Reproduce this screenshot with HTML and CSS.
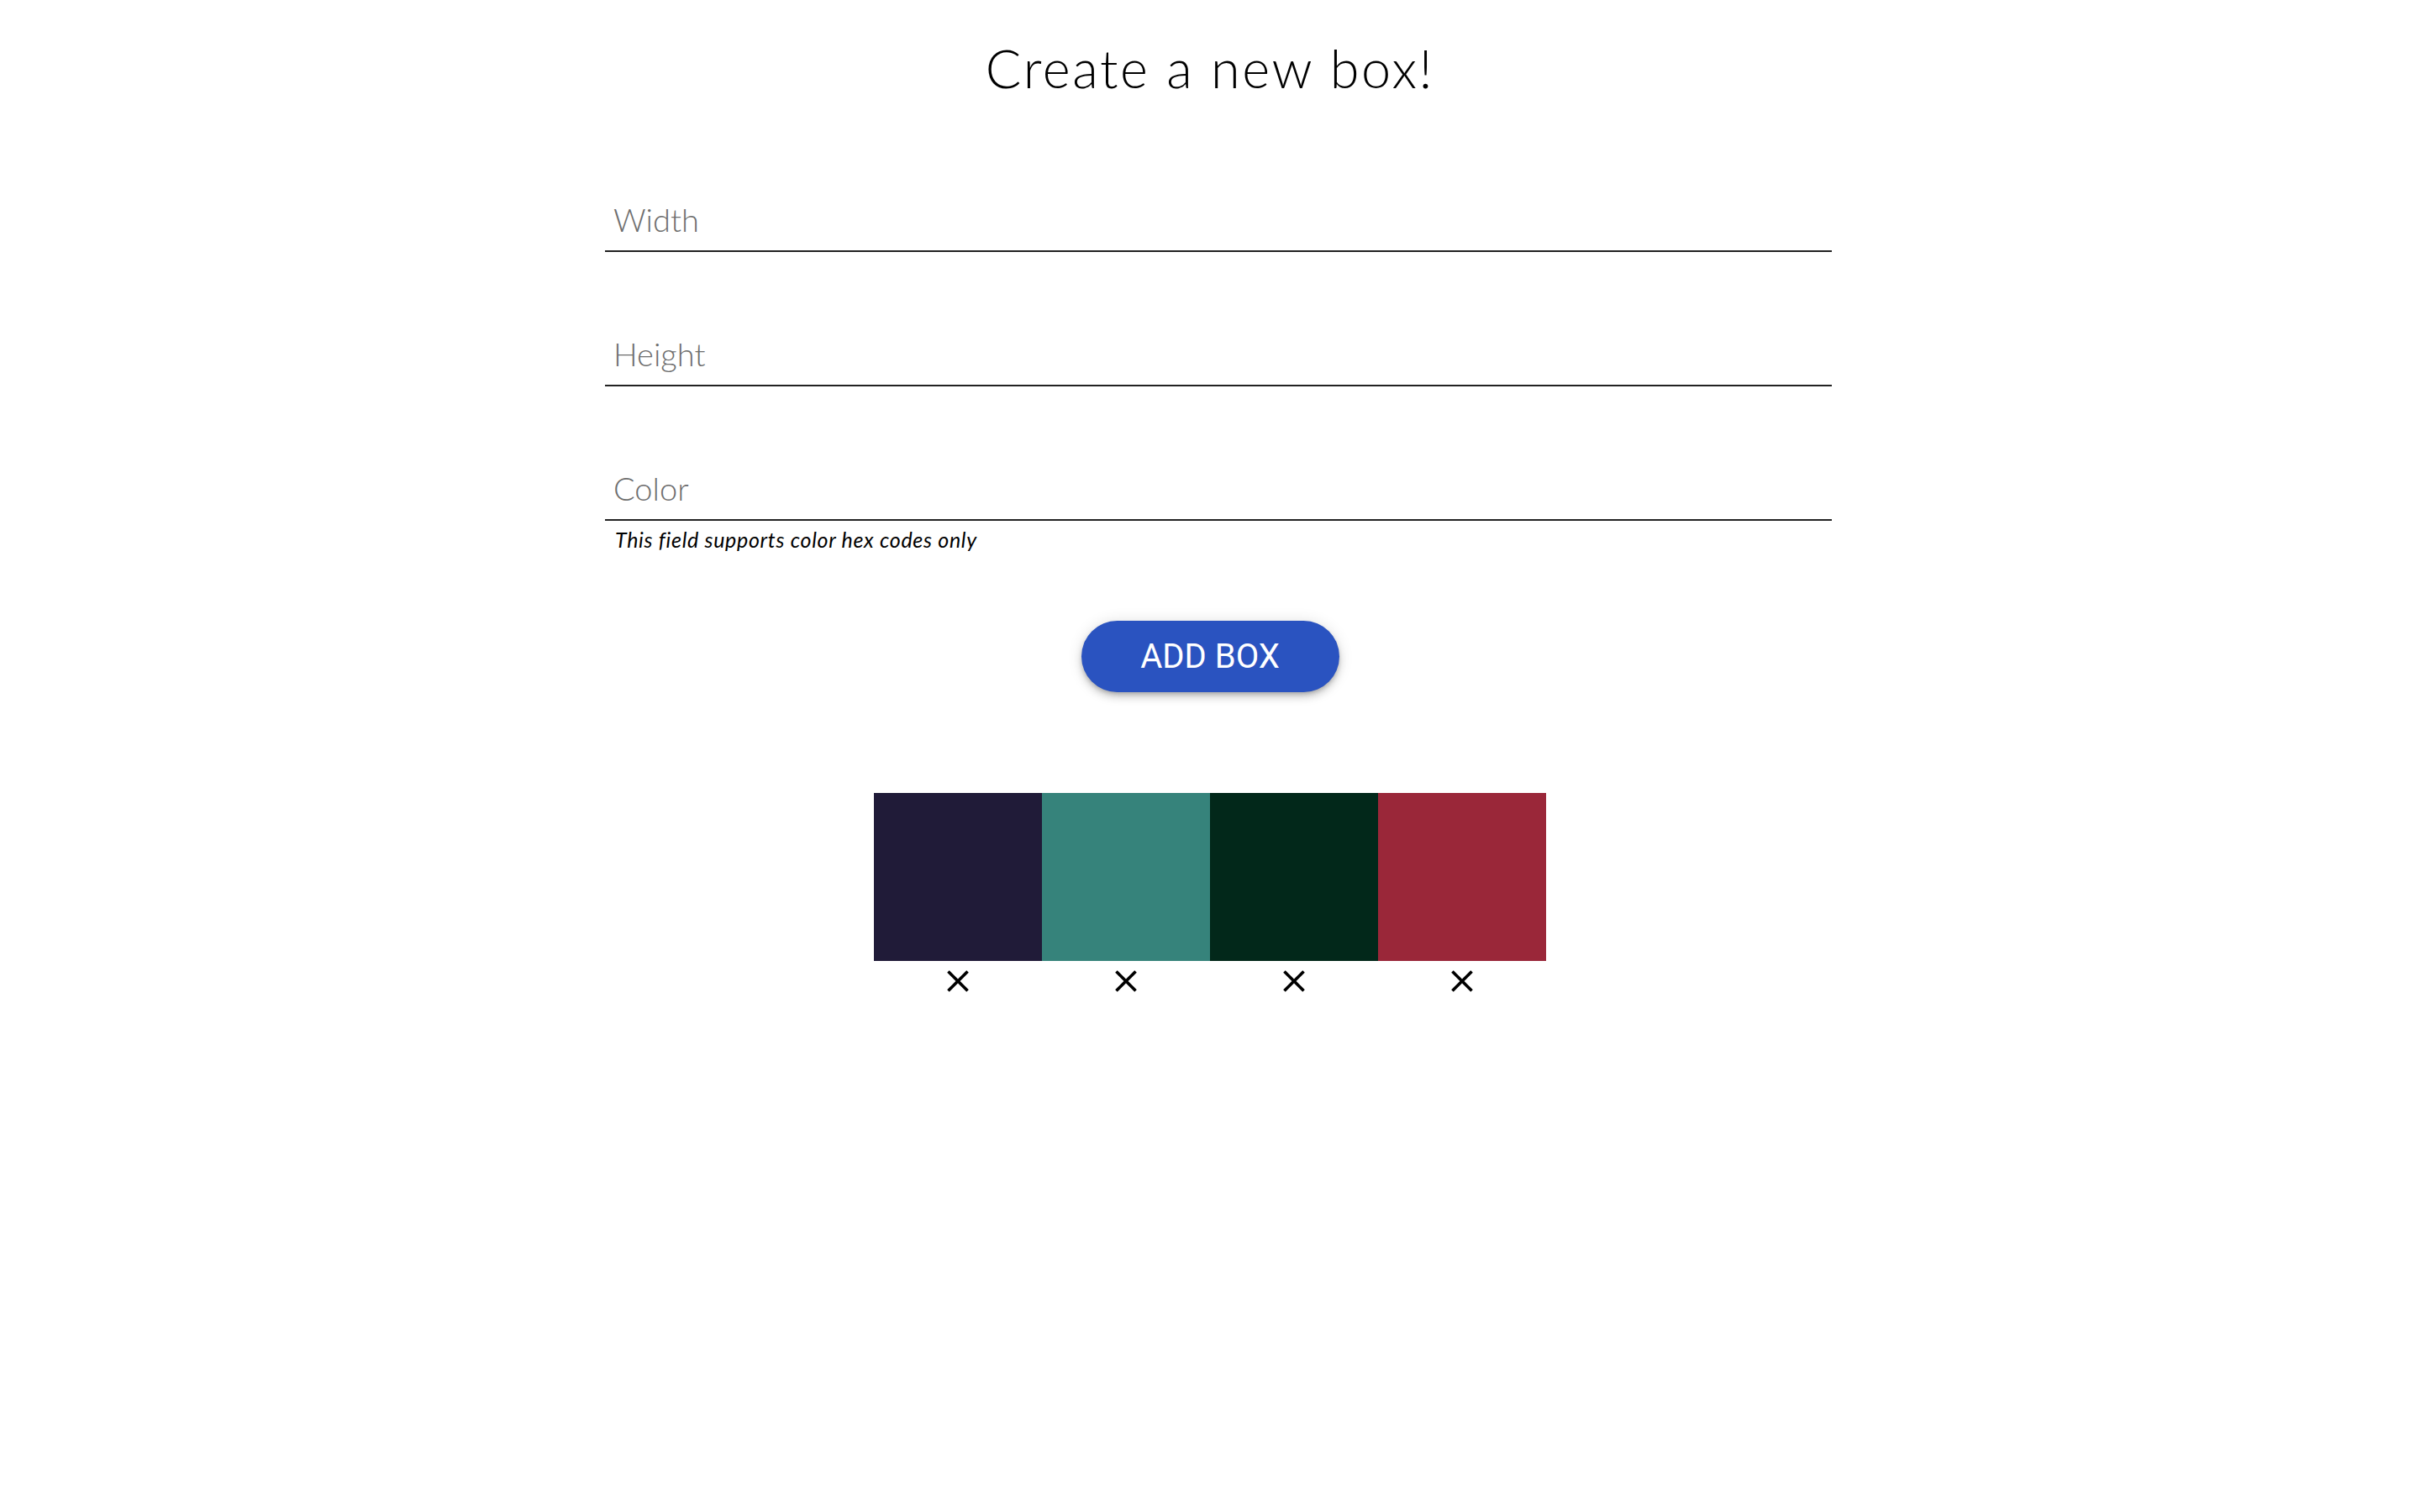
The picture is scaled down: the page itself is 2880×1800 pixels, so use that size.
FILE: index.html
```html
<!DOCTYPE html>
<html lang="en">
<head>
<meta charset="utf-8">
<title>Create a new box!</title>
<link rel="stylesheet" href="styles.css">
</head>
<body>
<main class="page">
  <h1 class="title">Create a new box!</h1>
  <form class="form">
    <div class="field">
      <input class="input" type="text" placeholder="Width">
    </div>
    <div class="field">
      <input class="input" type="text" placeholder="Height">
    </div>
    <div class="field field-last">
      <input class="input" type="text" placeholder="Color">
      <p class="helper">This field supports color hex codes only</p>
    </div>
  </form>
  <div class="actions">
    <button class="add-btn" type="button">ADD BOX</button>
  </div>
  <div class="boxes">
    <div class="box-item">
      <div class="box" style="background:#201b38"></div>
      <button class="remove" type="button" aria-label="remove"><svg viewBox="0 0 24 24" class="close-icon"><path d="M19 6.41L17.59 5 12 10.59 6.41 5 5 6.41 10.59 12 5 17.59 6.41 19 12 13.41 17.59 19 19 17.59 13.41 12z"/></svg></button>
    </div>
    <div class="box-item">
      <div class="box" style="background:#36837b"></div>
      <button class="remove" type="button" aria-label="remove"><svg viewBox="0 0 24 24" class="close-icon"><path d="M19 6.41L17.59 5 12 10.59 6.41 5 5 6.41 10.59 12 5 17.59 6.41 19 12 13.41 17.59 19 19 17.59 13.41 12z"/></svg></button>
    </div>
    <div class="box-item">
      <div class="box" style="background:#02281a"></div>
      <button class="remove" type="button" aria-label="remove"><svg viewBox="0 0 24 24" class="close-icon"><path d="M19 6.41L17.59 5 12 10.59 6.41 5 5 6.41 10.59 12 5 17.59 6.41 19 12 13.41 17.59 19 19 17.59 13.41 12z"/></svg></button>
    </div>
    <div class="box-item">
      <div class="box" style="background:#9a2739"></div>
      <button class="remove" type="button" aria-label="remove"><svg viewBox="0 0 24 24" class="close-icon"><path d="M19 6.41L17.59 5 12 10.59 6.41 5 5 6.41 10.59 12 5 17.59 6.41 19 12 13.41 17.59 19 19 17.59 13.41 12z"/></svg></button>
    </div>
  </div>
</main>
</body>
</html>
```

FILE: styles.css
```css
* {
  box-sizing: border-box;
}

html, body {
  margin: 0;
  padding: 0;
  background: #ffffff;
}

body {
  font-family: Lato, "Open Sans", sans-serif;
  color: #000;
}

.page {
  display: flex;
  flex-direction: column;
  align-items: center;
  width: 100%;
}

.title {
  margin: 45px 0 0;
  font-family: Lato, sans-serif;
  font-weight: 300;
  font-size: 63px;
  line-height: 72px;
  letter-spacing: 2.6px;
  color: #000;
}

.form {
  align-self: flex-start;
  margin: 121px 0 0 720px;
  width: 1460px;
  display: flex;
  flex-direction: column;
  gap: 98px;
}

.field {
  display: flex;
  flex-direction: column;
}

.input {
  width: 100%;
  border: none;
  border-bottom: 2px solid #222222;
  outline: none;
  margin: 0;
  padding: 0 10px 14px;
  font-family: Lato, sans-serif;
  font-weight: 300;
  font-size: 38px;
  line-height: 46px;
  height: 62px;
  color: #000;
  background: transparent;
  letter-spacing: 0;
}

.input::placeholder {
  color: #6e6e6e;
  opacity: 1;
}

.helper {
  margin: 8px 0 0;
  padding-left: 12px;
  font-family: Lato, sans-serif;
  font-style: italic;
  font-weight: 400;
  font-size: 25px;
  line-height: 29px;
  letter-spacing: 0.7px;
  color: #000;
}

.actions {
  margin-top: 82px;
  display: flex;
  justify-content: center;
}

.add-btn {
  height: 85px;
  width: 307px;
  padding: 0;
  border: none;
  border-radius: 43px;
  background: #2a53c0;
  color: #fff;
  font-family: Roboto, sans-serif;
  font-weight: 400;
  font-size: 40px;
  line-height: 1;
  box-shadow: 0 3px 5px -1px rgba(0,0,0,0.2), 0 6px 10px 0 rgba(0,0,0,0.14), 0 1px 18px 0 rgba(0,0,0,0.12);
  cursor: pointer;
}

.boxes {
  margin-top: 120px;
  display: flex;
}

.box-item {
  display: flex;
  flex-direction: column;
  align-items: center;
}

.box {
  width: 200px;
  height: 200px;
}

.remove {
  margin-top: 2px;
  padding: 0;
  border: none;
  background: transparent;
  width: 44px;
  height: 44px;
  display: flex;
  cursor: pointer;
}

.close-icon {
  width: 44px;
  height: 44px;
  fill: #000;
}
```
